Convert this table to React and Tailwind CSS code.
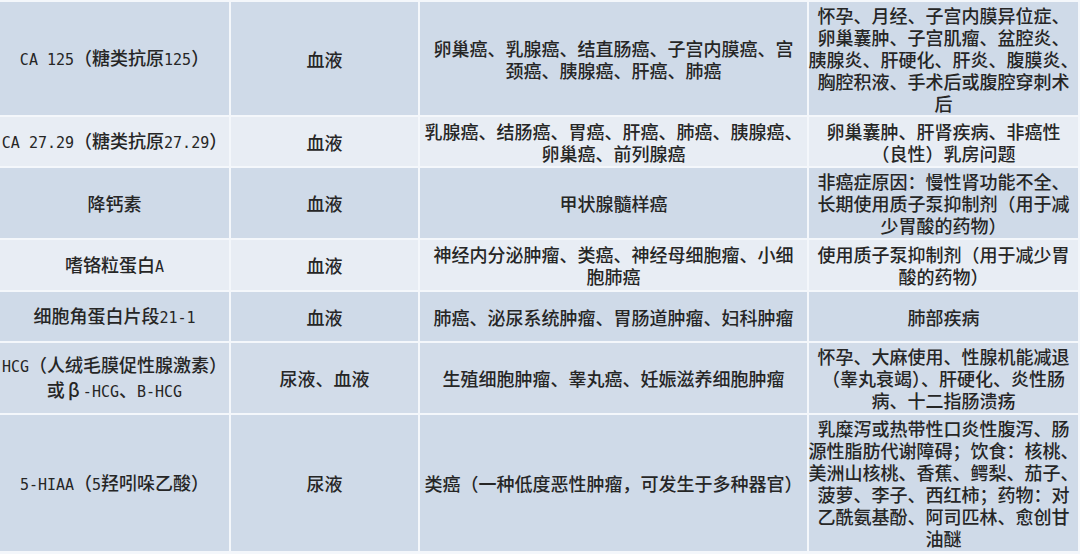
const rows = [
  {
    h: "h-[113px]",
    bg: "bg-[#cfdae8]",
    cells: [
      ["CA 125（糖类抗原125）"],
      ["血液"],
      ["卵巢癌、乳腺癌、结直肠癌、子宫内膜癌、宫", "颈癌、胰腺癌、肝癌、肺癌"],
      [
        "怀孕、月经、子宫内膜异位症、",
        "卵巢囊肿、子宫肌瘤、盆腔炎、",
        "胰腺炎、肝硬化、肝炎、腹膜炎、",
        "胸腔积液、手术后或腹腔穿刺术",
        "后",
      ],
    ],
  },
  {
    h: "h-[49px]",
    bg: "bg-[#e8edf4]",
    cells: [
      ["CA 27.29（糖类抗原27.29）"],
      ["血液"],
      ["乳腺癌、结肠癌、胃癌、肝癌、肺癌、胰腺癌、", "卵巢癌、前列腺癌"],
      ["卵巢囊肿、肝肾疾病、非癌性", "（良性）乳房问题"],
    ],
  },
  {
    h: "h-[70px]",
    bg: "bg-[#cfdae8]",
    cells: [
      ["降钙素"],
      ["血液"],
      ["甲状腺髓样癌"],
      ["非癌症原因：慢性肾功能不全、", "长期使用质子泵抑制剂（用于减", "少胃酸的药物）"],
    ],
  },
  {
    h: "h-[50px]",
    bg: "bg-[#e8edf4]",
    cells: [
      ["嗜铬粒蛋白A"],
      ["血液"],
      ["神经内分泌肿瘤、类癌、神经母细胞瘤、小细", "胞肺癌"],
      ["使用质子泵抑制剂（用于减少胃", "酸的药物）"],
    ],
  },
  {
    h: "h-[49px]",
    bg: "bg-[#cfdae8]",
    cells: [
      ["细胞角蛋白片段21-1"],
      ["血液"],
      ["肺癌、泌尿系统肿瘤、胃肠道肿瘤、妇科肿瘤"],
      ["肺部疾病"],
    ],
  },
  {
    h: "h-[70px]",
    bg: "bg-[#d2dce9]",
    cells: [
      ["HCG（人绒毛膜促性腺激素）", "或β-HCG、B-HCG"],
      ["尿液、血液"],
      ["生殖细胞肿瘤、睾丸癌、妊娠滋养细胞肿瘤"],
      ["怀孕、大麻使用、性腺机能减退", "（睾丸衰竭）、肝硬化、炎性肠", "病、十二指肠溃疡"],
    ],
  },
  {
    h: "h-[136px]",
    bg: "bg-[#cfdae8]",
    cells: [
      ["5-HIAA（5羟吲哚乙酸）"],
      ["尿液"],
      ["类癌（一种低度恶性肿瘤，可发生于多种器官）"],
      [
        "乳糜泻或热带性口炎性腹泻、肠",
        "源性脂肪代谢障碍；饮食：核桃、",
        "美洲山核桃、香蕉、鳄梨、茄子、",
        "菠萝、李子、西红柿；药物：对",
        "乙酰氨基酚、阿司匹林、愈创甘",
        "油醚",
      ],
    ],
  },
];

const widths = ["w-[229px]", "w-[187px]", "w-[387px]", "w-[269px]"];

// latin runs look half-width in the original font
function Line({ text }) {
  const parts = text.split(/([A-Za-z0-9 .\-]+|β)/).filter(Boolean);
  return (
    <div className="whitespace-nowrap">
      {parts.map((p, i) => {
        if (p === "β")
          return (
            <span key={i} className="inline-block w-[18px] text-center">
              β
            </span>
          );
        if (/^[A-Za-z0-9 .\-]+$/.test(p))
          return (
            <span key={i} className="font-['DejaVu_Sans_Mono',monospace] text-[15px] font-normal">
              {p}
            </span>
          );
        return <span key={i}>{p}</span>;
      })}
    </div>
  );
}

export default function App() {
  return (
    <div className="w-[1080px] h-[554px] overflow-hidden bg-[#f4f7fb] pt-[2px] pr-[2px] flex flex-col gap-[2px] font-['Noto_Sans_CJK_SC',sans-serif] font-medium text-[18px] leading-[22px] text-[#262626]">
      {rows.map((row, r) => (
        <div key={r} className={`flex gap-[2px] shrink-0 ${row.h}`}>
          {row.cells.map((lines, c) => (
            <div
              key={c}
              className={`${widths[c]} ${row.bg} shrink-0 flex flex-col items-center justify-center text-center`}
            >
              {lines.map((l, i) => (
                <Line key={i} text={l} />
              ))}
            </div>
          ))}
        </div>
      ))}
    </div>
  );
}
